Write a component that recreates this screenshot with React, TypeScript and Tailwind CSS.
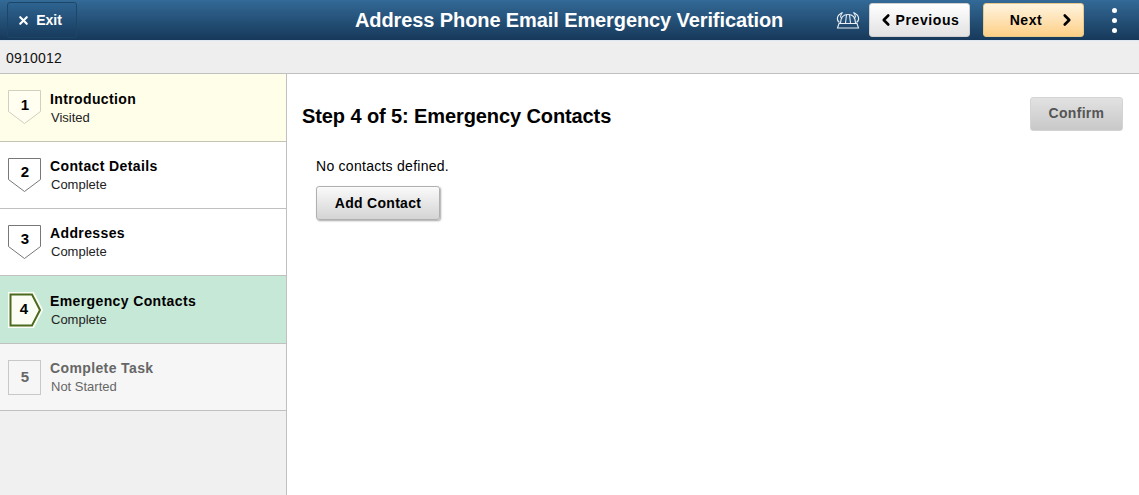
import { ChevronLeft, ChevronRight, X } from "lucide-react";

type StepKind = "visited" | "complete" | "current" | "disabled";

const steps: { num: number; title: string; status: string; kind: StepKind; height: string }[] = [
  { num: 1, title: "Introduction", status: "Visited", kind: "visited", height: "h-[68px]" },
  { num: 2, title: "Contact Details", status: "Complete", kind: "complete", height: "h-[67px]" },
  { num: 3, title: "Addresses", status: "Complete", kind: "complete", height: "h-[67px]" },
  { num: 4, title: "Emergency Contacts", status: "Complete", kind: "current", height: "h-[68px]" },
  { num: 5, title: "Complete Task", status: "Not Started", kind: "disabled", height: "h-[67px]" },
];

function StepBadge({ num, kind }: { num: number; kind: StepKind }) {
  if (kind === "current") {
    return (
      <div className="relative w-[36px] h-[38px] shrink-0 ml-[7px]">
        <svg width="36" height="38" viewBox="0 0 36 38" className="absolute inset-0">
          <path d="M2.5 2.5H26L34.5 19L26 35.5H2.5Z" fill="#fbfdf5" stroke="#fbfdf5" strokeWidth="3" />
          <path d="M3.5 3.5H25L33 19L25 34.5H3.5Z" fill="#fbfdf5" stroke="#4c6a1f" strokeWidth="2" />
        </svg>
        <span className="absolute left-[4px] top-0 w-[26px] h-[38px] flex items-center justify-center text-[15px] font-bold text-black">{num}</span>
      </div>
    );
  }
  if (kind === "disabled") {
    return (
      <div className="w-[33px] h-[35px] shrink-0 ml-[8px] border border-[#c8c8c8] bg-[#f6f6f6] flex items-center justify-center pl-px text-[15px] font-bold text-[#666666]">
        {num}
      </div>
    );
  }
  const stroke = kind === "visited" ? "#d0cfc0" : "#777777";
  const fill = kind === "visited" ? "#fffef0" : "#ffffff";
  return (
    <div className="relative w-[33px] h-[35px] shrink-0 ml-[8px]">
      <svg width="33" height="35" viewBox="0 0 33 35" className="absolute inset-0">
        <path d="M0.5 0.5H32.5V21.5L16.5 33.5L0.5 21.5Z" fill={fill} stroke={stroke} />
      </svg>
      <span className="absolute inset-x-0 top-0 h-[30px] pl-px flex items-center justify-center text-[15px] font-bold text-black">{num}</span>
    </div>
  );
}

function Step({ num, title, status, kind, height }: (typeof steps)[number]) {
  const bg =
    kind === "visited" ? "bg-[#fffee9]" : kind === "current" ? "bg-[#c6e8d6]" : kind === "disabled" ? "bg-[#f6f6f6]" : "bg-white";
  const border = kind === "visited" ? "border-[#c4c3b4]" : "border-[#c0c0c0]";
  return (
    <div className={`${height} ${bg} ${border} border-b flex items-center`}>
      <StepBadge num={num} kind={kind} />
      <div className={`${kind === "current" ? "ml-[7px]" : "ml-[9px]"} pt-px flex flex-col`}>
        <span className={`text-[14px] leading-[18px] font-bold tracking-[0.38px] ${kind === "disabled" ? "text-[#666666]" : "text-black"}`}>{title}</span>
        <span className={`text-[13px] leading-[18px] ml-px mt-px ${kind === "disabled" ? "text-[#666666]" : "text-[#222222]"}`}>{status}</span>
      </div>
    </div>
  );
}

function HelmetIcon() {
  return (
    <svg width="24" height="20" viewBox="0 0 24 20" fill="none" stroke="#e8eef4" strokeWidth="1.1">
      <path d="M4.5 13C4.5 7.5 7.5 4.5 12 4.5C16.5 4.5 19.5 7.5 19.5 13" />
      <path d="M10.5 4.8L9.5 13M13.5 4.8L14.5 13" />
      <path d="M3 13.5H21L22.5 18H1.5Z" />
      <path d="M3.5 12.5C0.5 10.5 0 5.5 6.5 2.5C4 5.5 4 7.5 6.2 8.5" />
      <path d="M20.5 12.5C23.5 10.5 24 5.5 17.5 2.5C20 5.5 20 7.5 17.8 8.5" />
    </svg>
  );
}

export default function App() {
  return (
    <div className="h-[495px] w-[1139px] overflow-hidden bg-white flex flex-col font-['Liberation_Sans',Arial,sans-serif]">
      <header className="h-[41px] shrink-0 bg-gradient-to-b from-[#336a97] to-[#17395a] flex items-center relative border-b border-[#dfe8f0]">
        <button className="ml-[7px] h-[36px] w-[70px] -mt-[1px] pt-px rounded-[3px] border border-[#1c4668] bg-gradient-to-b from-[#2e6491] to-[#183c5e] flex items-center justify-center gap-[6px] pr-[5px] text-white text-[14px] font-bold">
          <X size={13} strokeWidth={4} />
          Exit
        </button>
        <h1 className="absolute left-[355px] top-[8px] text-[20px] leading-[24px] font-bold tracking-[-0.1px] text-white whitespace-nowrap">
          Address Phone Email Emergency Verification
        </h1>
        <div className="ml-auto flex items-center">
          <HelmetIcon />
          <button className="ml-[9px] h-[34px] w-[101px] rounded-[3px] border border-[#d0d0d0] bg-gradient-to-b from-[#ffffff] to-[#e2e2e2] flex items-center justify-center gap-[1px] pr-[3px] text-[14px] tracking-[0.6px] font-bold text-black">
            <ChevronLeft size={18} strokeWidth={3.5} />
            Previous
          </button>
          <button className="ml-[13px] h-[34px] w-[101px] rounded-[3px] border border-[#e8c98a] bg-gradient-to-b from-[#fff4df] to-[#fdcf85] flex items-center justify-center gap-[16px] pl-[19px] text-[14px] tracking-[0.6px] font-bold text-black">
            Next
            <ChevronRight size={18} strokeWidth={3.5} />
          </button>
          <div className="ml-[28px] mr-[22px] flex flex-col gap-[5px]">
            <span className="w-[5px] h-[5px] rounded-full bg-white" />
            <span className="w-[5px] h-[5px] rounded-full bg-white" />
            <span className="w-[5px] h-[5px] rounded-full bg-white" />
          </div>
        </div>
      </header>
      <div className="h-[33px] shrink-0 bg-[#eeeeee] border-b border-[#c0c0c0] flex items-center pl-[6px] pt-[2px] text-[14px] tracking-[0.2px] text-[#111111]">
        0910012
      </div>
      <div className="flex flex-1 min-h-0">
        <aside className="w-[287px] shrink-0 bg-[#f0f0f0] border-r border-[#c0c0c0]">
          {steps.map((s) => (
            <Step key={s.num} {...s} />
          ))}
        </aside>
        <main className="flex-1 relative">
          <div className="flex justify-between pl-[15px] pr-[16px]">
            <h2 className="mt-[30px] text-[20px] leading-[24px] font-bold tracking-[-0.1px] text-black">Step 4 of 5: Emergency Contacts</h2>
            <button className="mt-[23px] h-[34px] w-[93px] rounded-[3px] border border-[#d4d4d4] bg-gradient-to-b from-[#e2e2e2] to-[#c8c8c8] text-[14px] font-bold tracking-[0.3px] text-[#555555] pb-[2px]">
              Confirm
            </button>
          </div>
          <p className="ml-[29px] mt-[26px] text-[14px] leading-[18px] tracking-[0.27px] text-black">No contacts defined.</p>
          <button className="ml-[29px] mt-[11px] h-[34px] w-[124px] rounded-[3px] border border-[#b0b0b0] bg-gradient-to-b from-[#fafafa] to-[#d4d4d4] shadow-[1px_1px_2px_rgba(0,0,0,0.35)] text-[14px] font-bold tracking-[0.3px] text-black">
            Add Contact
          </button>
        </main>
      </div>
    </div>
  );
}
